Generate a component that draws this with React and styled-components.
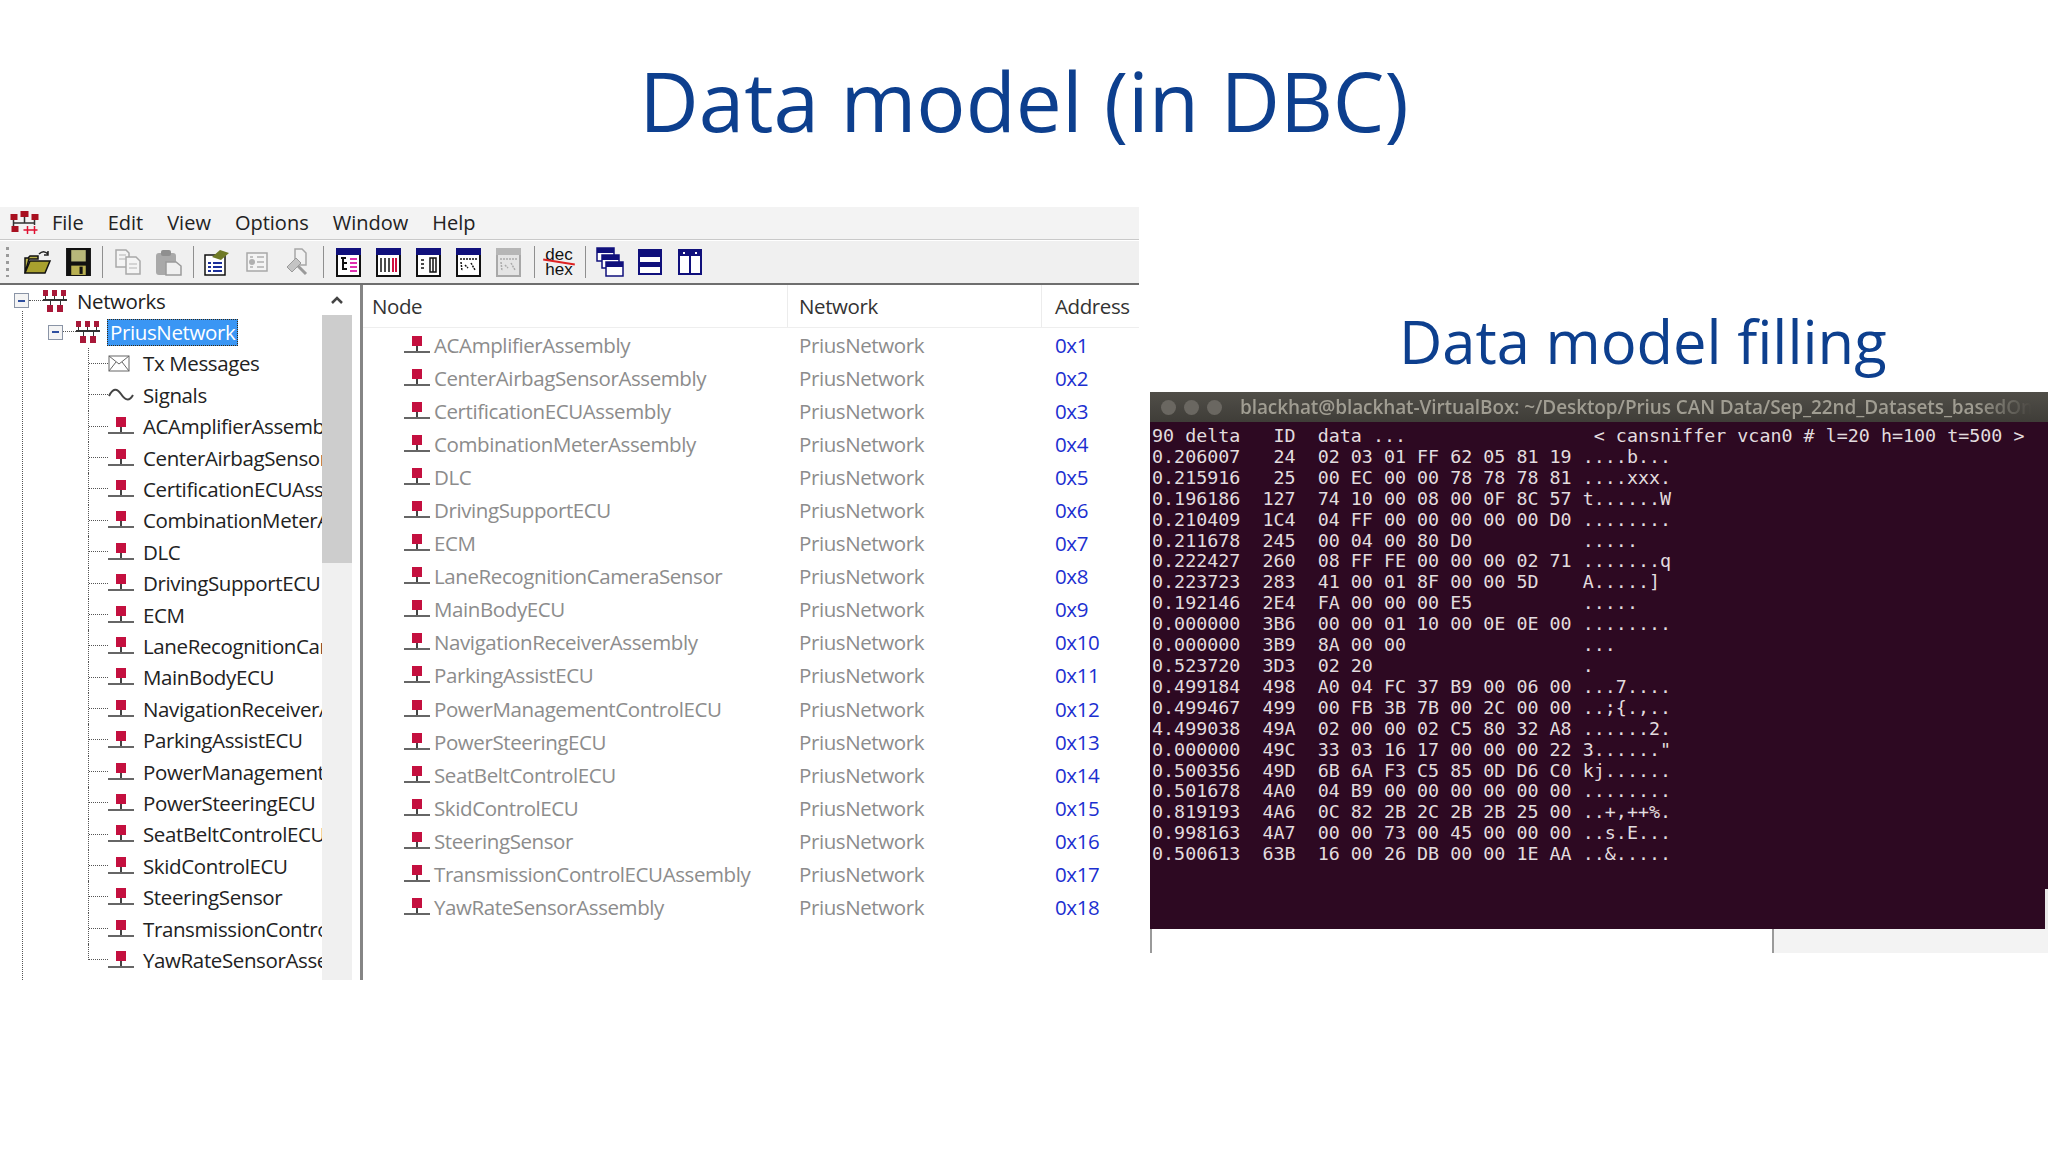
import React from 'react';
import styled, { createGlobalStyle } from 'styled-components';

const Global = createGlobalStyle`
    html, body {
        margin: 0;
        padding: 0;
        background: #ffffff;
        overflow: hidden;
    }
`

const UI_FONT = '"Open Sans", "Noto Sans", sans-serif';

const Slide = styled.div`
    width: 2048px;
    height: 1152px;
    background: #ffffff;
    font-family: ${UI_FONT};
    display: flex;
    flex-direction: column;
`

const Title = styled.h1`
    margin: 0;
    height: 207px;
    padding-top: 41px;
    box-sizing: border-box;
    text-align: center;
    font-size: 82px;
    line-height: 118px;
    font-weight: 400;
    color: #0d3f8e;
`

const Body = styled.div`
    display: flex;
    align-items: flex-start;
    gap: 11px;
`

/* left window */
const Win = styled.section`
    width: 1139px;
    flex: none;
    height: 773px;
    display: flex;
    flex-direction: column;
    overflow: hidden;
    color: #222;
`

const MenuBar = styled.div`
    height: 31px;
    flex: none;
    background: #f3f3f3;
    border-bottom: 2px solid #c9c9c9;
    display: flex;
    align-items: center;
    padding-left: 10px;
    padding-bottom: 1px;
    box-sizing: content-box;
    margin-bottom: -1px;
    font-size: 20px;
`

const MenuItem = styled.span`
    margin-left: ${p => p.$gap}px;
`

const ToolBar = styled.div`
    height: 42px;
    flex: none;
    background: #f0f0f0;
    border-top: 1px solid #fff;
    border-bottom: 2px solid #6e6e6e;
    display: flex;
    align-items: center;
    padding-left: 6px;
`

const Grip = styled.span`
    width: 3px;
    height: 30px;
    margin-right: 15px;
    background: repeating-linear-gradient(#9a9a9a 0 3px, transparent 3px 7px);
`

const ToolBtn = styled.span`
    width: 28px;
    height: 28px;
    margin-right: ${p => p.$mr ?? 12}px;
    display: flex;
    align-items: center;
    justify-content: center;
    flex: none;
`

const ToolSep = styled.span`
    width: 1px;
    height: 32px;
    background: #8f8f8f;
    margin-right: ${p => p.$r}px;
    flex: none;
`

const DecHex = styled.span`
    width: 32px;
    flex: none;
    margin-right: 10px;
    position: relative;
    font-family: "Liberation Sans", sans-serif;
    font-size: 17px;
    line-height: 15px;
    text-align: center;
    color: #111;
    &::after {
        content: '';
        position: absolute;
        left: 0;
        right: 0;
        top: 14px;
        height: 2px;
        background: #d22;
        transform: rotate(9deg);
    }
`

const Panes = styled.div`
    flex: 1;
    display: flex;
    min-height: 0;
`

const TreePane = styled.div`
    width: 322px;
    flex: none;
    overflow: hidden;
    box-sizing: border-box;
    font-size: 20.5px;
    letter-spacing: -0.38px;
    white-space: nowrap;
    position: relative;
`

const Scroll = styled.div`
    width: 30px;
    flex: none;
    background: #f0f0f0;
    display: flex;
    flex-direction: column;
`

const ScrollArrow = styled.div`
    height: 30px;
    background: #fff;
    display: flex;
    align-items: center;
    justify-content: center;
`

const ScrollThumb = styled.div`
    height: 248px;
    background: #cdcdcd;
`

const Divider = styled.div`
    width: 3px;
    flex: none;
    margin-left: 8px;
    background: #858585;
`

const ListPane = styled.div`
    flex: 1;
    min-width: 0;
    white-space: nowrap;
    font-size: 20.5px;
    letter-spacing: -0.4px;
`

const ColumnHead = styled.div`
    height: 42px;
    display: flex;
    border-bottom: 1px solid #eeeeee;
`

const HeadCell = styled.div`
    width: ${p => p.$w}px;
    flex: none;
    box-sizing: border-box;
    padding-left: ${p => p.$pl}px;
    line-height: 42px;
    color: #333;
    border-right: ${p => (p.$line ? '1px solid #ececec' : 'none')};
`

const ListRow = styled.div`
    height: 33.1px;
    display: flex;
    align-items: center;
`

const NodeCell = styled.div`
    width: 425px;
    flex: none;
    box-sizing: border-box;
    padding-left: 41px;
    display: flex;
    align-items: center;
    gap: 4px;
    color: #8c8c8c;
`

const NetCell = styled.div`
    width: 254px;
    flex: none;
    padding-left: 11px;
    box-sizing: border-box;
    color: #8c8c8c;
`

const AddrCell = styled.div`
    padding-left: 13px;
    color: #1c2fd0;
`

const TreeRow = styled.div`
    height: 31.4px;
    display: flex;
    align-items: center;
    padding-left: ${p => p.$indent ?? 0}px;
`

const RootLine = styled.div`
    position: absolute;
    left: 22px;
    top: 26px;
    bottom: 0;
    border-left: 1px dotted #555;
`

const Elbow = styled.span`
    width: ${p => p.$w ?? 20}px;
    height: ${p => (p.$last ? '50%' : '100%')};
    align-self: flex-start;
    flex: none;
    box-sizing: border-box;
    border-left: ${p => (p.$noLine ? 'none' : '1px dotted #555')};
    &::after {
        content: '';
        display: block;
        height: 15px;
        border-bottom: 1px dotted #555;
    }
`

const MinusBox = styled.span`
    width: 15px;
    height: 15px;
    flex: none;
    box-sizing: border-box;
    border: 1px solid #8a94a6;
    background: #f4f4f4;
    display: flex;
    align-items: center;
    justify-content: center;
    &::after {
        content: '';
        width: 7px;
        height: 2px;
        background: #2f4f9f;
    }
`

const TreeIcon = styled.span`
    width: ${p => p.$w ?? 26}px;
    flex: none;
    display: flex;
    margin-right: ${p => p.$mr ?? 9}px;
`

const Selected = styled.span`
    height: 27px;
    line-height: 25px;
    box-sizing: border-box;
    padding: 0 2px;
    margin-left: 7px;
    background: #3a96f4;
    color: #fff;
    border: 1px dotted #3a2a10;
`

/* right column */
const Right = styled.section`
    flex: 1;
    min-width: 0;
    display: flex;
    flex-direction: column;
`

const Subtitle = styled.h2`
    margin: 0;
    height: 185px;
    box-sizing: border-box;
    padding-top: 94px;
    padding-left: 249px;
    font-size: 59.7px;
    line-height: 80px;
    font-weight: 400;
    color: #0d3f8e;
    white-space: nowrap;
`

const Terminal = styled.div`
    height: 537px;
    background: #2d0922;
    display: flex;
    flex-direction: column;
    position: relative;
    overflow: hidden;
`

const TermTitle = styled.div`
    height: 30px;
    flex: none;
    background: linear-gradient(#504e48, #3f3d38);
    display: flex;
    align-items: center;
    padding-left: 11px;
    font-size: 19px;
    font-weight: 600;
    letter-spacing: -0.1px;
    color: #a09d92;
    white-space: nowrap;
`

const TermDot = styled.span`
    width: 15px;
    height: 15px;
    border-radius: 50%;
    background: #6a6761;
    margin-right: 8px;
    flex: none;
`

const TitleText = styled.span`
    margin-left: 10px;
    flex: 1;
    overflow: hidden;
    -webkit-mask-image: linear-gradient(to right, #000 91%, transparent 98%);
    mask-image: linear-gradient(to right, #000 91%, transparent 98%);
`

const TermText = styled.pre`
    margin: 0;
    padding: 4px 0 0 2px;
    font-family: "DejaVu Sans Mono", monospace;
    font-size: 18.35px;
    line-height: 20.9px;
    color: #e2dcdf;
`

const Notch = styled.span`
    position: absolute;
    right: 0;
    bottom: 0;
    width: 3px;
    height: 40px;
    background: #e8e8e8;
`

const UnderTerm = styled.div`
    height: 24px;
    display: flex;
`

const UnderLeft = styled.div`
    width: 624px;
    flex: none;
    box-sizing: border-box;
    background: #fff;
    border-left: 2px solid #9a9a9a;
    border-right: 2px solid #9a9a9a;
`

const UnderRight = styled.div`
    flex: 1;
    background: #f3f3f3;
`

/* drawings */
function NodeIcon({ w = 26 }) {
    return (
        <svg width={w} height="18" viewBox="0 0 26 18">
            <rect x="8" y="0" width="10" height="10" fill="#c4103f" />
            <rect x="12" y="10" width="2" height="5" fill="#444" />
            <rect x="0" y="15" width="26" height="2" fill="#666" />
        </svg>
    );
}

function NetIcon() {
    return (
        <svg width="24" height="22" viewBox="0 0 24 22">
            <g fill="#a81838">
                <rect x="0" y="0" width="5" height="6" />
                <rect x="9" y="0" width="5" height="6" />
                <rect x="18" y="0" width="5" height="6" />
                <rect x="4" y="15" width="6" height="7" />
                <rect x="14" y="15" width="6" height="7" />
            </g>
            <g fill="#333">
                <rect x="0" y="9" width="24" height="2" />
                <rect x="2" y="6" width="1" height="3" />
                <rect x="11" y="6" width="1" height="3" />
                <rect x="20" y="6" width="1" height="3" />
                <rect x="7" y="11" width="1" height="4" />
                <rect x="17" y="11" width="1" height="4" />
            </g>
        </svg>
    );
}

function LogoIcon() {
    return (
        <svg width="29" height="24" viewBox="0 0 28 24">
            <g fill="#a81020">
                <rect x="0" y="3" width="7" height="6" />
                <rect x="10" y="0" width="8" height="6" />
                <rect x="21" y="3" width="7" height="6" />
                <rect x="1" y="15" width="7" height="6" />
            </g>
            <path d="M3 9v6M14 6v6M24 9v5M3 12h21" stroke="#333" strokeWidth="1.5" fill="none" />
            <path d="M13 19h8M17 15v8M20 19h7M24 15v8" stroke="#e01030" strokeWidth="1.5" fill="none" />
        </svg>
    );
}

function EnvelopeIcon() {
    return (
        <svg width="22" height="17" viewBox="0 0 22 17">
            <rect x="1" y="1" width="20" height="15" fill="#fff" stroke="#666" />
            <path d="M1 1l10 8 10-8M1 16l7-9M21 16l-7-9" stroke="#666" fill="none" />
        </svg>
    );
}

function WaveIcon() {
    return (
        <svg width="26" height="16" viewBox="0 0 26 16">
            <path d="M1 9C5 1 9 1 13 7s8 8 12 1" stroke="#444" strokeWidth="2" fill="none" />
        </svg>
    );
}

function FolderIcon() {
    return (
        <svg width="28" height="26" viewBox="0 0 28 26">
            <path d="M1 24V9h3l2-2h8v3h-9l-4 14z" fill="#b9b24a" stroke="#111" strokeWidth="1.5" />
            <path d="M1 24l5-12h20l-5 12z" fill="#a8a02e" stroke="#111" strokeWidth="1.5" />
            <path d="M15 5c3-3 6-3 9 0M24 2v4h-4" stroke="#222" strokeWidth="1.5" fill="none" />
        </svg>
    );
}

function SaveIcon() {
    return (
        <svg width="25" height="28" viewBox="0 0 24 27">
            <rect x="0" y="0" width="24" height="27" fill="#111" />
            <rect x="5" y="2" width="14" height="11" fill="#b7b77a" />
            <rect x="5" y="17" width="14" height="9" fill="#b9b052" />
            <rect x="13" y="18" width="3" height="7" fill="#111" />
        </svg>
    );
}

function CopyIcon() {
    return (
        <svg width="26" height="26" viewBox="0 0 26 26">
            <path d="M1 1h10l3 3v14H1z" fill="#f4f4f4" stroke="#a8a8a8" strokeWidth="1.5" />
            <path d="M11 8h10l4 4v13H11z" fill="#f4f4f4" stroke="#a8a8a8" strokeWidth="1.5" />
            <path d="M4 6h7M4 10h7M14 15h8M14 19h8" stroke="#b4b4b4" />
        </svg>
    );
}

function PasteIcon() {
    return (
        <svg width="27" height="27" viewBox="0 0 27 27">
            <rect x="1" y="4" width="20" height="22" rx="3" fill="#a9a9a9" />
            <rect x="6" y="1" width="10" height="6" rx="2" fill="#8f8f8f" />
            <path d="M11 13h10l5 4v9H11z" fill="#f0f0f0" stroke="#9a9a9a" strokeWidth="1.5" />
        </svg>
    );
}

function PropsIcon() {
    return (
        <svg width="26" height="27" viewBox="0 0 26 27">
            <rect x="1" y="6" width="20" height="20" fill="#fff" stroke="#111" strokeWidth="1.5" />
            <path d="M4 14h3M9 14h9M4 18h3M9 18h9M4 22h3M9 22h9" stroke="#1b2f9a" strokeWidth="2" />
            <path d="M8 8l8-7 9 3-8 7z" fill="#6f7a26" />
        </svg>
    );
}

function CardIcon() {
    return (
        <svg width="22" height="20" viewBox="0 0 22 20">
            <rect x="1" y="1" width="20" height="18" fill="#f4f4f4" stroke="#a8a8a8" strokeWidth="1.5" />
            <circle cx="6" cy="10" r="3" fill="#b0b0b0" />
            <path d="M11 5h7M11 10h7M11 15h7M4 5h3M4 15h3" stroke="#b0b0b0" strokeWidth="1.5" />
        </svg>
    );
}

function ToolsIcon() {
    return (
        <svg width="24" height="28" viewBox="0 0 24 28">
            <path d="M10 1h7l4 4v12h-6l-5-5z" fill="#f2f2f2" stroke="#a6a6a6" strokeWidth="1.5" />
            <path d="M2 19l9-9 5 5-9 9z" fill="#c4c4c4" stroke="#9a9a9a" />
            <path d="M13 18l8 8" stroke="#9a9a9a" strokeWidth="3" />
        </svg>
    );
}

function ViewIcon({ kind, off }) {
    const edge = off ? '#a8a8a8' : '#111';
    const bar = off ? '#b6b6b6' : '#10107c';
    return (
        <svg width="25" height="29" viewBox="0 0 25 29">
            <rect x="0.5" y="0.5" width="24" height="28" fill={off ? '#e4e4e4' : '#fff'} stroke={edge} />
            <rect x="0" y="0" width="25" height="7" fill={bar} />
            <rect x="0" y="7" width="2" height="22" fill={edge} />
            <rect x="23" y="7" width="2" height="22" fill={edge} />
            <rect x="0" y="27" width="25" height="2" fill={edge} />
            {kind === 'tree' && <path d="M5 10h5M7 10v12M7 15h4M7 21h4" stroke="#111" strokeWidth="2" />}
            {kind === 'tree' && <path d="M14 11h7M14 15h7M14 19h7M14 23h7" stroke="#e030b0" strokeWidth="2" />}
            {kind === 'table' && <path d="M5 10v14M9 10v14M13 10v14" stroke="#111" strokeWidth="1.5" />}
            {kind === 'table' && <path d="M17 10v14M20 10v14" stroke="#d01040" strokeWidth="2" />}
            {kind === 'split' && <path d="M5 12h3M5 16h3M5 20h3M14 10h6v14h-6zM17 10v14" stroke="#111" strokeWidth="1.5" fill="none" />}
            {(kind === 'chart' || kind === 'offchart') && <path d="M4 11h17M5 14l1 9M9 17l3 3M15 15l4 7" stroke={off ? '#aaa' : '#111'} strokeWidth="1.5" strokeDasharray="2 1" fill="none" />}
        </svg>
    );
}

function CascadeIcon() {
    return (
        <svg width="28" height="30" viewBox="0 0 28 30">
            <rect x="1" y="1" width="17" height="13" fill="#fff" stroke="#10107c" strokeWidth="1.5" />
            <rect x="1" y="1" width="17" height="5" fill="#10107c" />
            <rect x="6" y="8" width="17" height="13" fill="#fff" stroke="#10107c" strokeWidth="1.5" />
            <rect x="6" y="8" width="17" height="5" fill="#10107c" />
            <rect x="10" y="15" width="17" height="14" fill="#fff" stroke="#10107c" strokeWidth="1.5" />
            <rect x="10" y="15" width="17" height="5" fill="#10107c" />
        </svg>
    );
}

function RowsIcon() {
    return (
        <svg width="24" height="26" viewBox="0 0 24 26">
            <rect x="1" y="1" width="22" height="24" fill="#fff" stroke="#10107c" strokeWidth="2" />
            <rect x="1" y="1" width="22" height="7" fill="#10107c" />
            <rect x="1" y="13" width="22" height="5" fill="#10107c" />
        </svg>
    );
}

function ColsIcon() {
    return (
        <svg width="24" height="26" viewBox="0 0 24 26">
            <rect x="1" y="1" width="22" height="24" fill="#fff" stroke="#10107c" strokeWidth="2" />
            <rect x="1" y="1" width="22" height="6" fill="#10107c" />
            <rect x="11" y="1" width="2" height="24" fill="#10107c" />
            <rect x="5" y="3" width="2" height="2" fill="#fff" />
            <rect x="17" y="3" width="2" height="2" fill="#fff" />
        </svg>
    );
}

function ChevronUp() {
    return (
        <svg width="14" height="10" viewBox="0 0 14 10">
            <path d="M2 8l5-5 5 5" stroke="#444" strokeWidth="2.5" fill="none" />
        </svg>
    );
}

const ecus = [
    'ACAmplifierAssembly', 'CenterAirbagSensorAssembly', 'CertificationECUAssembly',
    'CombinationMeterAssembly', 'DLC', 'DrivingSupportECU', 'ECM',
    'LaneRecognitionCameraSensor', 'MainBodyECU', 'NavigationReceiverAssembly',
    'ParkingAssistECU', 'PowerManagementControlECU', 'PowerSteeringECU',
    'SeatBeltControlECU', 'SkidControlECU', 'SteeringSensor',
    'TransmissionControlECUAssembly', 'YawRateSensorAssembly',
];

const addresses = ['0x1', '0x2', '0x3', '0x4', '0x5', '0x6', '0x7', '0x8', '0x9',
    '0x10', '0x11', '0x12', '0x13', '0x14', '0x15', '0x16', '0x17', '0x18'];

const menus = [['File', 13], ['Edit', 24], ['View', 24], ['Options', 24], ['Window', 24], ['Help', 24]];

const termLines = [
    '90 delta   ID  data ...                 < cansniffer vcan0 # l=20 h=100 t=500 >',
    '0.206007   24  02 03 01 FF 62 05 81 19 ....b...',
    '0.215916   25  00 EC 00 00 78 78 78 81 ....xxx.',
    '0.196186  127  74 10 00 08 00 0F 8C 57 t......W',
    '0.210409  1C4  04 FF 00 00 00 00 00 D0 ........',
    '0.211678  245  00 04 00 80 D0          .....',
    '0.222427  260  08 FF FE 00 00 00 02 71 .......q',
    '0.223723  283  41 00 01 8F 00 00 5D    A.....]',
    '0.192146  2E4  FA 00 00 00 E5          .....',
    '0.000000  3B6  00 00 01 10 00 0E 0E 00 ........',
    '0.000000  3B9  8A 00 00                ...',
    '0.523720  3D3  02 20                   .',
    '0.499184  498  A0 04 FC 37 B9 00 06 00 ...7....',
    '0.499467  499  00 FB 3B 7B 00 2C 00 00 ..;{.,..',
    '4.499038  49A  02 00 00 02 C5 80 32 A8 ......2.',
    '0.000000  49C  33 03 16 17 00 00 00 22 3......"',
    '0.500356  49D  6B 6A F3 C5 85 0D D6 C0 kj......',
    '0.501678  4A0  04 B9 00 00 00 00 00 00 ........',
    '0.819193  4A6  0C 82 2B 2C 2B 2B 25 00 ..+,++%.',
    '0.998163  4A7  00 00 73 00 45 00 00 00 ..s.E...',
    '0.500613  63B  16 00 26 DB 00 00 1E AA ..&.....',
];

function App() {
    return (
        <>
            <Global />
            <Slide>
                <Title>Data model (in DBC)</Title>
                <Body>
                    <Win>
                        <MenuBar>
                            <LogoIcon />
                            {menus.map(([name, gap]) => (
                                <MenuItem key={name} $gap={gap}>{name}</MenuItem>
                            ))}
                        </MenuBar>
                        <ToolBar>
                            <Grip />
                            <ToolBtn><FolderIcon /></ToolBtn>
                            <ToolBtn $mr={10}><SaveIcon /></ToolBtn>
                            <ToolSep $r={11} />
                            <ToolBtn><CopyIcon /></ToolBtn>
                            <ToolBtn $mr={11}><PasteIcon /></ToolBtn>
                            <ToolSep $r={9} />
                            <ToolBtn><PropsIcon /></ToolBtn>
                            <ToolBtn><CardIcon /></ToolBtn>
                            <ToolBtn><ToolsIcon /></ToolBtn>
                            <ToolSep $r={10} />
                            <ToolBtn><ViewIcon kind="tree" /></ToolBtn>
                            <ToolBtn><ViewIcon kind="table" /></ToolBtn>
                            <ToolBtn><ViewIcon kind="split" /></ToolBtn>
                            <ToolBtn><ViewIcon kind="chart" /></ToolBtn>
                            <ToolBtn><ViewIcon kind="offchart" off /></ToolBtn>
                            <ToolSep $r={8} />
                            <DecHex>dec<br />hex</DecHex>
                            <ToolSep $r={10} />
                            <ToolBtn><CascadeIcon /></ToolBtn>
                            <ToolBtn><RowsIcon /></ToolBtn>
                            <ToolBtn><ColsIcon /></ToolBtn>
                        </ToolBar>
                        <Panes>
                            <TreePane>
                                <RootLine />
                                <TreeRow $indent={14}>
                                    <MinusBox />
                                    <Elbow $w={14} $noLine />
                                    <TreeIcon $w={24} $mr={10}><NetIcon /></TreeIcon>
                                    Networks
                                </TreeRow>
                                <TreeRow $indent={48}>
                                    <MinusBox />
                                    <Elbow $w={13} $noLine />
                                    <TreeIcon $w={24} $mr={0}><NetIcon /></TreeIcon>
                                    <Selected>PriusNetwork</Selected>
                                </TreeRow>
                                <TreeRow $indent={88}>
                                    <Elbow />
                                    <TreeIcon $mr={9}><EnvelopeIcon /></TreeIcon>
                                    Tx Messages
                                </TreeRow>
                                <TreeRow $indent={88}>
                                    <Elbow />
                                    <TreeIcon $mr={9}><WaveIcon /></TreeIcon>
                                    Signals
                                </TreeRow>
                                {ecus.map((name, i) => (
                                    <TreeRow key={name} $indent={88}>
                                        <Elbow $last={i === ecus.length - 1} />
                                        <TreeIcon><NodeIcon /></TreeIcon>
                                        {name}
                                    </TreeRow>
                                ))}
                            </TreePane>
                            <Scroll>
                                <ScrollArrow><ChevronUp /></ScrollArrow>
                                <ScrollThumb />
                            </Scroll>
                            <Divider />
                            <ListPane>
                                <ColumnHead>
                                    <HeadCell $w={425} $pl={9} $line>Node</HeadCell>
                                    <HeadCell $w={254} $pl={11} $line>Network</HeadCell>
                                    <HeadCell $w={90} $pl={13}>Address</HeadCell>
                                </ColumnHead>
                                {ecus.map((name, i) => (
                                    <ListRow key={name}>
                                        <NodeCell><NodeIcon />{name}</NodeCell>
                                        <NetCell>PriusNetwork</NetCell>
                                        <AddrCell>{addresses[i]}</AddrCell>
                                    </ListRow>
                                ))}
                            </ListPane>
                        </Panes>
                    </Win>
                    <Right>
                        <Subtitle>Data model filling</Subtitle>
                        <Terminal>
                            <TermTitle>
                                <TermDot />
                                <TermDot />
                                <TermDot />
                                <TitleText>blackhat@blackhat-VirtualBox: ~/Desktop/Prius CAN Data/Sep_22nd_Datasets_basedOn</TitleText>
                            </TermTitle>
                            <TermText>{termLines.join('\n')}</TermText>
                            <Notch />
                        </Terminal>
                        <UnderTerm>
                            <UnderLeft />
                            <UnderRight />
                        </UnderTerm>
                    </Right>
                </Body>
            </Slide>
        </>
    );
}

export default App;
